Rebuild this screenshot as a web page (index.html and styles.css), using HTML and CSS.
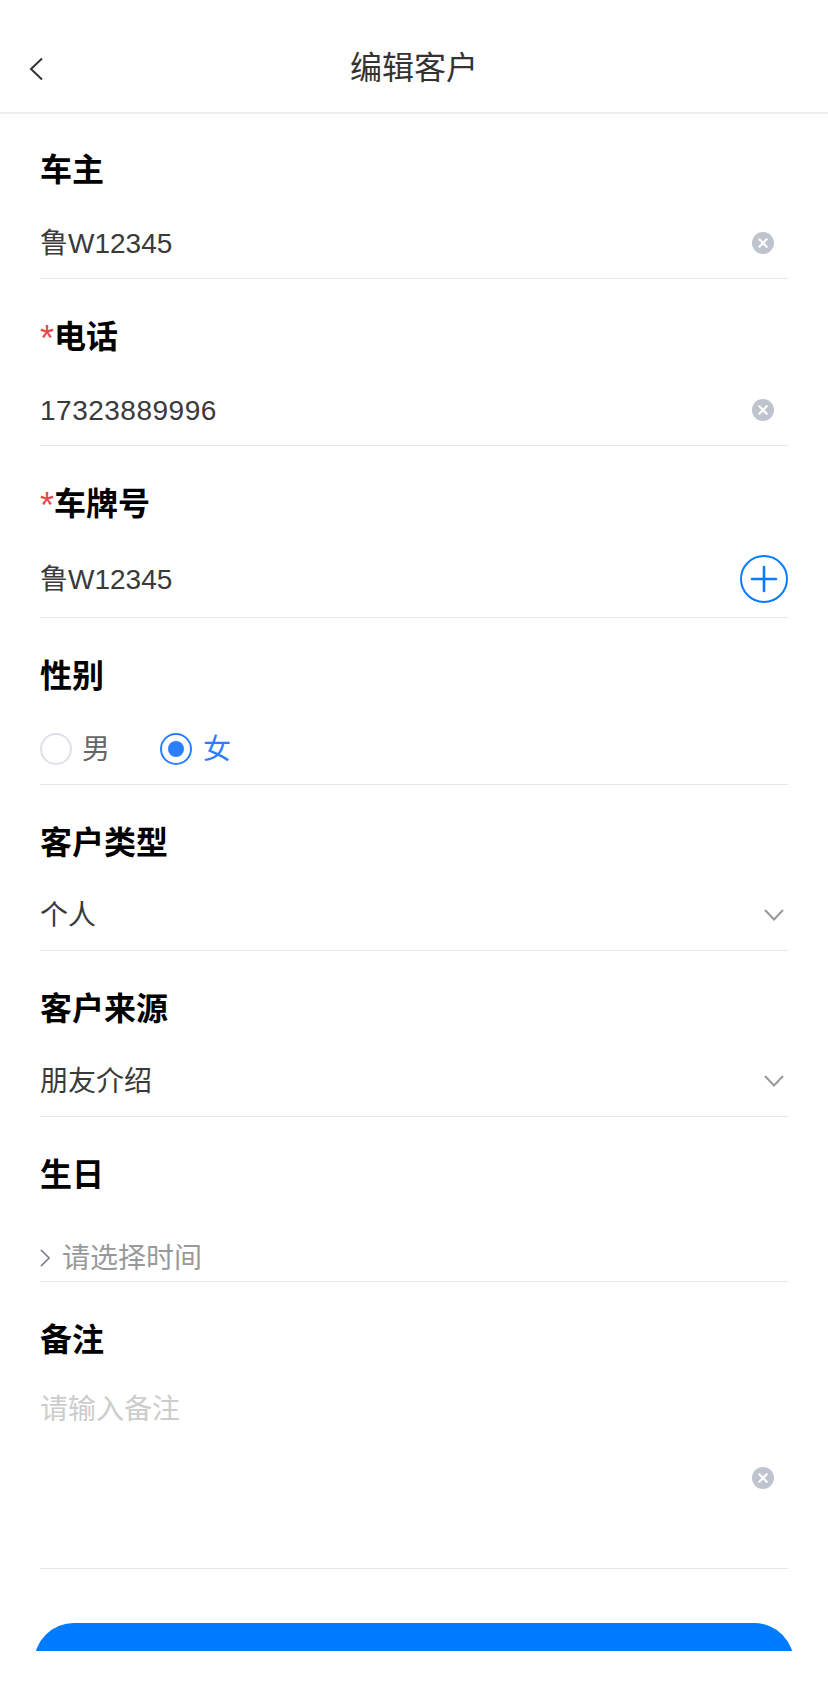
FILE: index.html
```html
<!doctype html>
<html lang="zh-CN">
<head>
    <meta charset="UTF-8">
    <title>编辑客户</title>
    <link rel="stylesheet" href="styles.css">
</head>
<body>
    <div class="page">
        <div class="nav">
            <svg class="nav-back" viewBox="0 0 16 24"><path d="M14 1.5 3 12l11 10.5"/></svg>
            <div class="nav-title">编辑客户</div>
        </div>

        <div class="field field-first">
            <div class="label">车主</div>
            <div class="row">
                <span class="value">鲁W12345</span>
                <svg class="clear" viewBox="0 0 24 24"><circle cx="12" cy="12" r="12"/><path d="m8 8 8 8m0-8-8 8"/></svg>
            </div>
        </div>

        <div class="field">
            <div class="label"><span class="star">*</span>电话</div>
            <div class="row">
                <span class="value phone">17323889996</span>
                <svg class="clear" viewBox="0 0 24 24"><circle cx="12" cy="12" r="12"/><path d="m8 8 8 8m0-8-8 8"/></svg>
            </div>
        </div>

        <div class="field">
            <div class="label"><span class="star">*</span>车牌号</div>
            <div class="row row-plate">
                <span class="value">鲁W12345</span>
                <svg class="add" viewBox="0 0 48 48"><circle cx="24" cy="24" r="23"/><path d="M12 24h24M24 12v24"/></svg>
            </div>
        </div>

        <div class="field">
            <div class="label">性别</div>
            <div class="row row-radio">
                <span class="radio"></span>
                <span class="radio-text">男</span>
                <span class="radio radio-on"></span>
                <span class="radio-text radio-text-on">女</span>
            </div>
        </div>

        <div class="field">
            <div class="label">客户类型</div>
            <div class="row row-select">
                <span class="value">个人</span>
                <svg class="down" viewBox="0 0 20 12"><path d="m1 1 9 9.500 9-9.500"/></svg>
            </div>
        </div>

        <div class="field">
            <div class="label">客户来源</div>
            <div class="row row-select">
                <span class="value">朋友介绍</span>
                <svg class="down" viewBox="0 0 20 12"><path d="m1 1 9 9.500 9-9.500"/></svg>
            </div>
        </div>

        <div class="field">
            <div class="label">生日</div>
            <div class="row row-date">
                <svg class="date-arrow" viewBox="0 0 11 20"><path d="m1 1 9 9-9 9"/></svg>
                <span class="date-text">请选择时间</span>
            </div>
        </div>

        <div class="field">
            <div class="label">备注</div>
            <div class="remark">
                <div class="placeholder">请输入备注</div>
                <svg class="clear" viewBox="0 0 24 24"><circle cx="12" cy="12" r="12"/><path d="m8 8 8 8m0-8-8 8"/></svg>
            </div>
        </div>

        <div class="footer">
            <div class="btn"></div>
        </div>
    </div>
</body>
</html>
```

FILE: styles.css
```css
*{padding: 0; margin: 0; box-sizing: border-box;}
body{background: #fff; font-family: "Liberation Sans", "Noto Sans CJK SC", sans-serif; color: #333;}
.page{width: 828px; height: 1688px; overflow: hidden;}

.nav{height: 114px; border-bottom: 2px solid #eee; display: flex; align-items: center; justify-content: center; position: relative; padding-top: 24px;}
.nav-title{font-size: 32px; line-height: 46px; color: #333;}
.nav-back{position: absolute; left: 28px; top: 57px; width: 16px; height: 24px; fill: none; stroke: #333; stroke-width: 2;}

.field{margin: 0 40px; border-bottom: 1px solid #e8e8e8;}
.label{padding-top: 36px; height: 80px; font-size: 32px; line-height: 44px; font-weight: bold; color: #000; display: flex; align-items: center;}
.field-first .label{padding-top: 34px; height: 78px;}
.star{width: 14px; color: #e5484d; font-weight: normal; font-size: 36px; line-height: 1; padding-top: 6px; height: 44px;}

.row{height: 70px; margin-top: 16px; display: flex; align-items: center; justify-content: space-between;}
.row-plate{height: 76px; margin-top: 15px;}
.row-select{margin-top: 15px;}
.row-radio{justify-content: flex-start;}
.row-date{justify-content: flex-start; height: 46px; margin-top: 38px;}

.value{font-size: 28px; line-height: 40px; padding-top: 2px; color: #3a3a3a;}
.phone{letter-spacing: 0.5px;}

.clear{width: 22px; height: 22px; margin-right: 14px; flex: none;}
.clear circle{fill: #bfc3cd;}
.clear path{fill: none; stroke: #fff; stroke-width: 2.4; stroke-linecap: round;}

.add{width: 48px; height: 48px; flex: none;}
.add circle, .add path{fill: none; stroke: #0a7aff; stroke-width: 2;}
.add path{stroke-linecap: round; stroke-width: 2.6;}

.down{width: 20px; height: 12px; margin-right: 4px; flex: none; fill: none; stroke: #999; stroke-width: 2;}

.radio{width: 32px; height: 32px; border: 2px solid #dfe1e8; border-radius: 50%; flex: none; display: flex; align-items: center; justify-content: center;}
.radio-on{border-color: #2b7fff; margin-left: 50px;}
.radio-on::after{content: ""; width: 16px; height: 16px; border-radius: 50%; background: #2b7fff;}
.radio-text{font-size: 28px; line-height: 40px; padding-top: 2px; color: #666; margin-left: 10px;}
.radio-text-on{color: #2b7fff; margin-left: 11px;}

.date-arrow{width: 10px; height: 20px; flex: none; fill: none; stroke: #808090; stroke-width: 1.8;}
.date-text{font-size: 28px; line-height: 40px; padding-top: 1px; color: #999; margin-left: 12px;}

.remark{height: 206px; padding-top: 28px; position: relative;}
.placeholder{font-size: 28px; line-height: 40px; color: #ccc;}
.remark .clear{position: absolute; right: 0; top: 105px;}

.footer{height: 28px; margin: 54px 34px 0; overflow: hidden;}
.btn{height: 96px; border-radius: 40px; background: #007aff;}
```
